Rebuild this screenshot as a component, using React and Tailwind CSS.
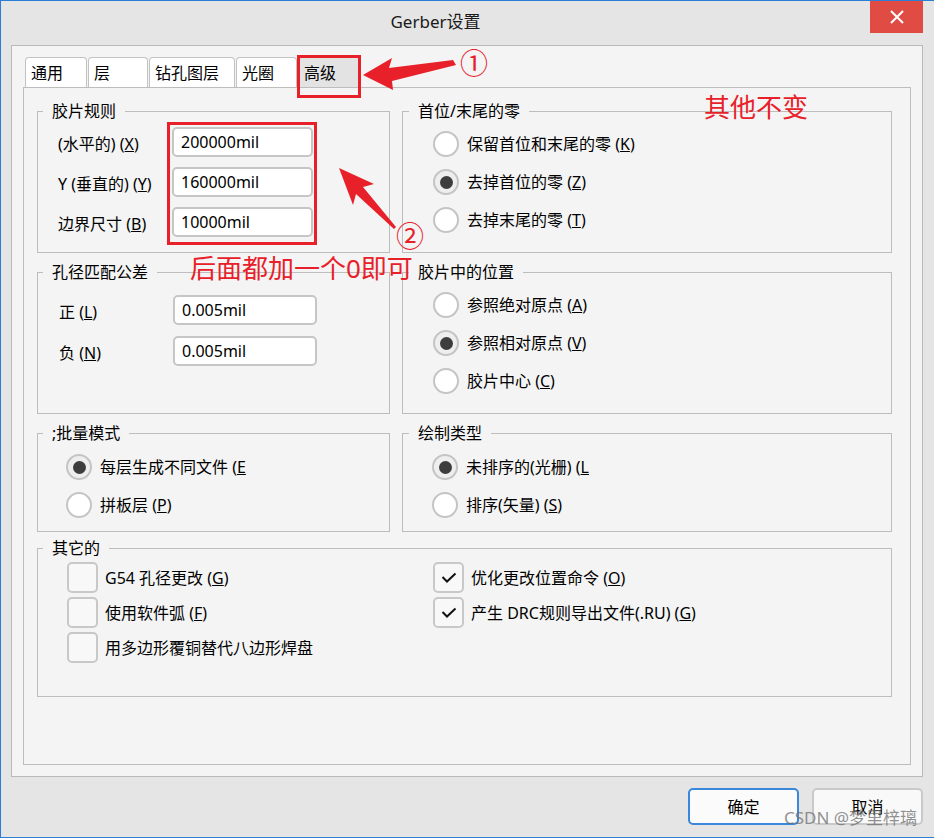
const RED = '#e8202a';

const Group = ({ title, right, className, children }) => (
  <fieldset className={`border border-[#bdbdbd] ${className}`}>
    <legend className={`${right ? 'ml-[6px]' : 'ml-[5px]'} px-[9px] text-[16px] leading-[22px] text-black`}>{title}</legend>
    {children}
  </fieldset>
);

const Field = ({ label, value, w }) => (
  <div className="flex h-[30px] items-center">
    <span className="w-[114px] shrink-0 pt-[3px] text-[16px] leading-[22px]">{label}</span>
    <div className={`flex h-[30px] ${w} items-center rounded-[5px] border-2 border-[#c6c6c6] bg-white pl-[7px] text-[16px]`}>
      {value}
    </div>
  </div>
);

const Radio = ({ checked, label }) => (
  <div className="flex h-[26px] items-center gap-[8px]">
    <span
      className={`flex h-[26px] w-[26px] shrink-0 items-center justify-center rounded-full border-2 border-[#c4c4c4] ${
        checked ? 'bg-[#eeeeee]' : 'bg-white'
      }`}
    >
      {checked && <span className="h-[13px] w-[13px] rounded-full bg-[#3d3d3d]" />}
    </span>
    <span className="whitespace-nowrap text-[16px] leading-[22px]">{label}</span>
  </div>
);

const Check = ({ checked, label }) => (
  <div className="flex h-[31px] items-center gap-[7px]">
    <span className="flex h-[31px] w-[31px] shrink-0 items-center justify-center rounded-[5px] border-2 border-[#c8c8c8] bg-[#f8f8f8]">
      {checked && (
        <svg width="16" height="11" viewBox="0 0 16 11">
          <path d="M1.5 5 L6 9.5 L14.5 1.5" fill="none" stroke="#111" strokeWidth="2" />
        </svg>
      )}
    </span>
    <span className="whitespace-nowrap text-[16px] leading-[22px]">{label}</span>
  </div>
);

const tabs = [
  { name: '通用', w: 'w-[62px]' },
  { name: '层', w: 'w-[60px]' },
  { name: '钻孔图层', w: 'w-[86px]' },
  { name: '光圈', w: 'w-[61px]' },
  { name: '高级', w: 'w-[62px]', active: true },
];

export default function App() {
  return (
    <div className="relative h-[838px] w-[934px] overflow-hidden border-t border-b border-l border-[#2b7dd6] bg-[#e5e5e5] font-['Noto_Sans','Noto_Sans_CJK_SC',sans-serif] text-black">
      {/* title bar */}
      <div className="flex h-[44px] items-start">
        <div className="flex h-[42px] flex-1 items-center justify-center text-[17px] text-[#1a1a1a]">Gerber设置</div>
        <div className="mr-[11px] flex h-[32px] w-[53px] items-center justify-center bg-[#e04c44]">
          <svg width="14" height="14" viewBox="0 0 14 14">
            <path d="M1 1 L13 13 M13 1 L1 13" stroke="#fff" strokeWidth="2" />
          </svg>
        </div>
      </div>

      {/* main panel */}
      <div className="ml-[10px] h-[732px] w-[912px] border border-[#b9b9b9] bg-[#f4f4f4] px-[11px] pt-[11px]">
        <div className="flex h-[30px] gap-[1px] pl-[2px]">
          {tabs.map((t) => (
            <div
              key={t.name}
              className={`${t.w} flex h-[30px] items-center rounded-t-[4px] border-t border-r border-l border-[#c2c2c2] pl-[5px] text-[16px] ${
                t.active ? 'bg-[#e3e3e3]' : 'bg-white'
              }`}
            >
              {t.name}
            </div>
          ))}
        </div>

        <div className="h-[678px] border border-[#bdbdbd] bg-[#f4f4f4] pt-[12px] pl-[13px]">
          <div className="grid w-[855px] grid-cols-[353px_490px] gap-x-[12px]">
            <Group title="胶片规则" className="h-[153px]">
              <div className="flex flex-col gap-[10px] pt-[5px] pl-[20px]">
                <Field label={<>(水平的) (<u>X</u>)</>} value="200000mil" w="w-[141px]" />
                <Field label={<>Y (垂直的) (<u>Y</u>)</>} value="160000mil" w="w-[141px]" />
                <Field label={<>边界尺寸 (<u>B</u>)</>} value="10000mil" w="w-[141px]" />
              </div>
            </Group>
            <Group title="首位/末尾的零" right className="h-[153px]">
              <div className="flex flex-col gap-[12px] pt-[9px] pl-[30px]">
                <Radio label={<>保留首位和末尾的零 (<u>K</u>)</>} />
                <Radio checked label={<>去掉首位的零 (<u>Z</u>)</>} />
                <Radio label={<>去掉末尾的零 (<u>T</u>)</>} />
              </div>
            </Group>

            <Group title="孔径匹配公差" className="mt-[8px] h-[153px]">
              <div className="flex flex-col gap-[11px] pt-[12px] pl-[21px]">
                <Field label={<>正 (<u>L</u>)</>} value="0.005mil" w="w-[144px]" />
                <Field label={<>负 (<u>N</u>)</>} value="0.005mil" w="w-[144px]" />
              </div>
            </Group>
            <Group title="胶片中的位置" right className="mt-[8px] h-[153px]">
              <div className="flex flex-col gap-[12px] pt-[9px] pl-[30px]">
                <Radio label={<>参照绝对原点 (<u>A</u>)</>} />
                <Radio checked label={<>参照相对原点 (<u>V</u>)</>} />
                <Radio label={<>胶片中心 (<u>C</u>)</>} />
              </div>
            </Group>

            <Group title=";批量模式" className="mt-[8px] h-[110px]">
              <div className="flex flex-col gap-[12px] pt-[10px] pl-[28px]">
                <Radio checked label={<>每层生成不同文件 (<u>E</u></>} />
                <Radio label={<>拼板层 (<u>P</u>)</>} />
              </div>
            </Group>
            <Group title="绘制类型" right className="mt-[8px] h-[110px]">
              <div className="flex flex-col gap-[12px] pt-[10px] pl-[29px]">
                <Radio checked label={<>未排序的(光栅) (<u>L</u></>} />
                <Radio label={<>排序(矢量) (<u>S</u>)</>} />
              </div>
            </Group>

            <Group title="其它的" className="col-span-2 mt-[5px] h-[160px]">
              <div className="grid grid-cols-[366px_1fr] pt-[3px] pl-[29px]">
                <div className="flex flex-col gap-[4px]">
                  <Check label={<>G54 孔径更改 (<u>G</u>)</>} />
                  <Check label={<>使用软件弧 (<u>F</u>)</>} />
                  <Check label="用多边形覆铜替代八边形焊盘" />
                </div>
                <div className="flex flex-col gap-[4px]">
                  <Check checked label={<>优化更改位置命令 (<u>O</u>)</>} />
                  <Check checked label={<>产生 DRC规则导出文件(.RU) (<u>G</u>)</>} />
                </div>
              </div>
            </Group>
          </div>
        </div>
      </div>

      {/* buttons */}
      <div className="mt-[11px] flex justify-end gap-[13px] pr-[11px]">
        <button className="h-[37px] w-[111px] rounded-[5px] border-2 border-[#3a88da] bg-[#fbfbfb] text-[16px]">确定</button>
        <button className="h-[37px] w-[111px] rounded-[5px] border-2 border-[#c9c9c9] bg-[#f9f9f9] text-[16px]">取消</button>
      </div>

      {/* annotations */}
      <div className="absolute top-[54px] left-[296px] h-[43px] w-[64px] border-[3px] border-[#e8202a]" />
      <div className="absolute top-[121px] left-[166px] h-[123px] w-[150px] border-[3px] border-[#e8202a]" />
      <svg className="pointer-events-none absolute top-0 left-0" width="934" height="838" viewBox="0 0 934 838">
        <polygon points="362,74 391,57 388,67 452,59 455,64 391,80 392,89" fill={RED} />
        <polygon points="338,167 373,183 362,186 395,226 393,228 355,193 352,204" fill={RED} />
      </svg>
      <span className="absolute top-[48px] left-[459px] text-[28px] leading-none text-[#e8202a]">①</span>
      <span className="absolute top-[221px] left-[395px] text-[28px] leading-none text-[#e8202a]">②</span>
      <span className="absolute top-[93px] left-[703px] text-[26px] leading-none text-[#e8202a]">其他不变</span>
      <span className="absolute top-[254px] left-[189px] text-[26px] leading-none whitespace-nowrap text-[#e8202a]">后面都加一个0即可</span>
      <span className="absolute top-[808px] left-[783px] text-[17px] leading-none whitespace-nowrap text-[rgba(110,110,110,0.75)]">CSDN @梦里梓璃</span>
    </div>
  );
}
